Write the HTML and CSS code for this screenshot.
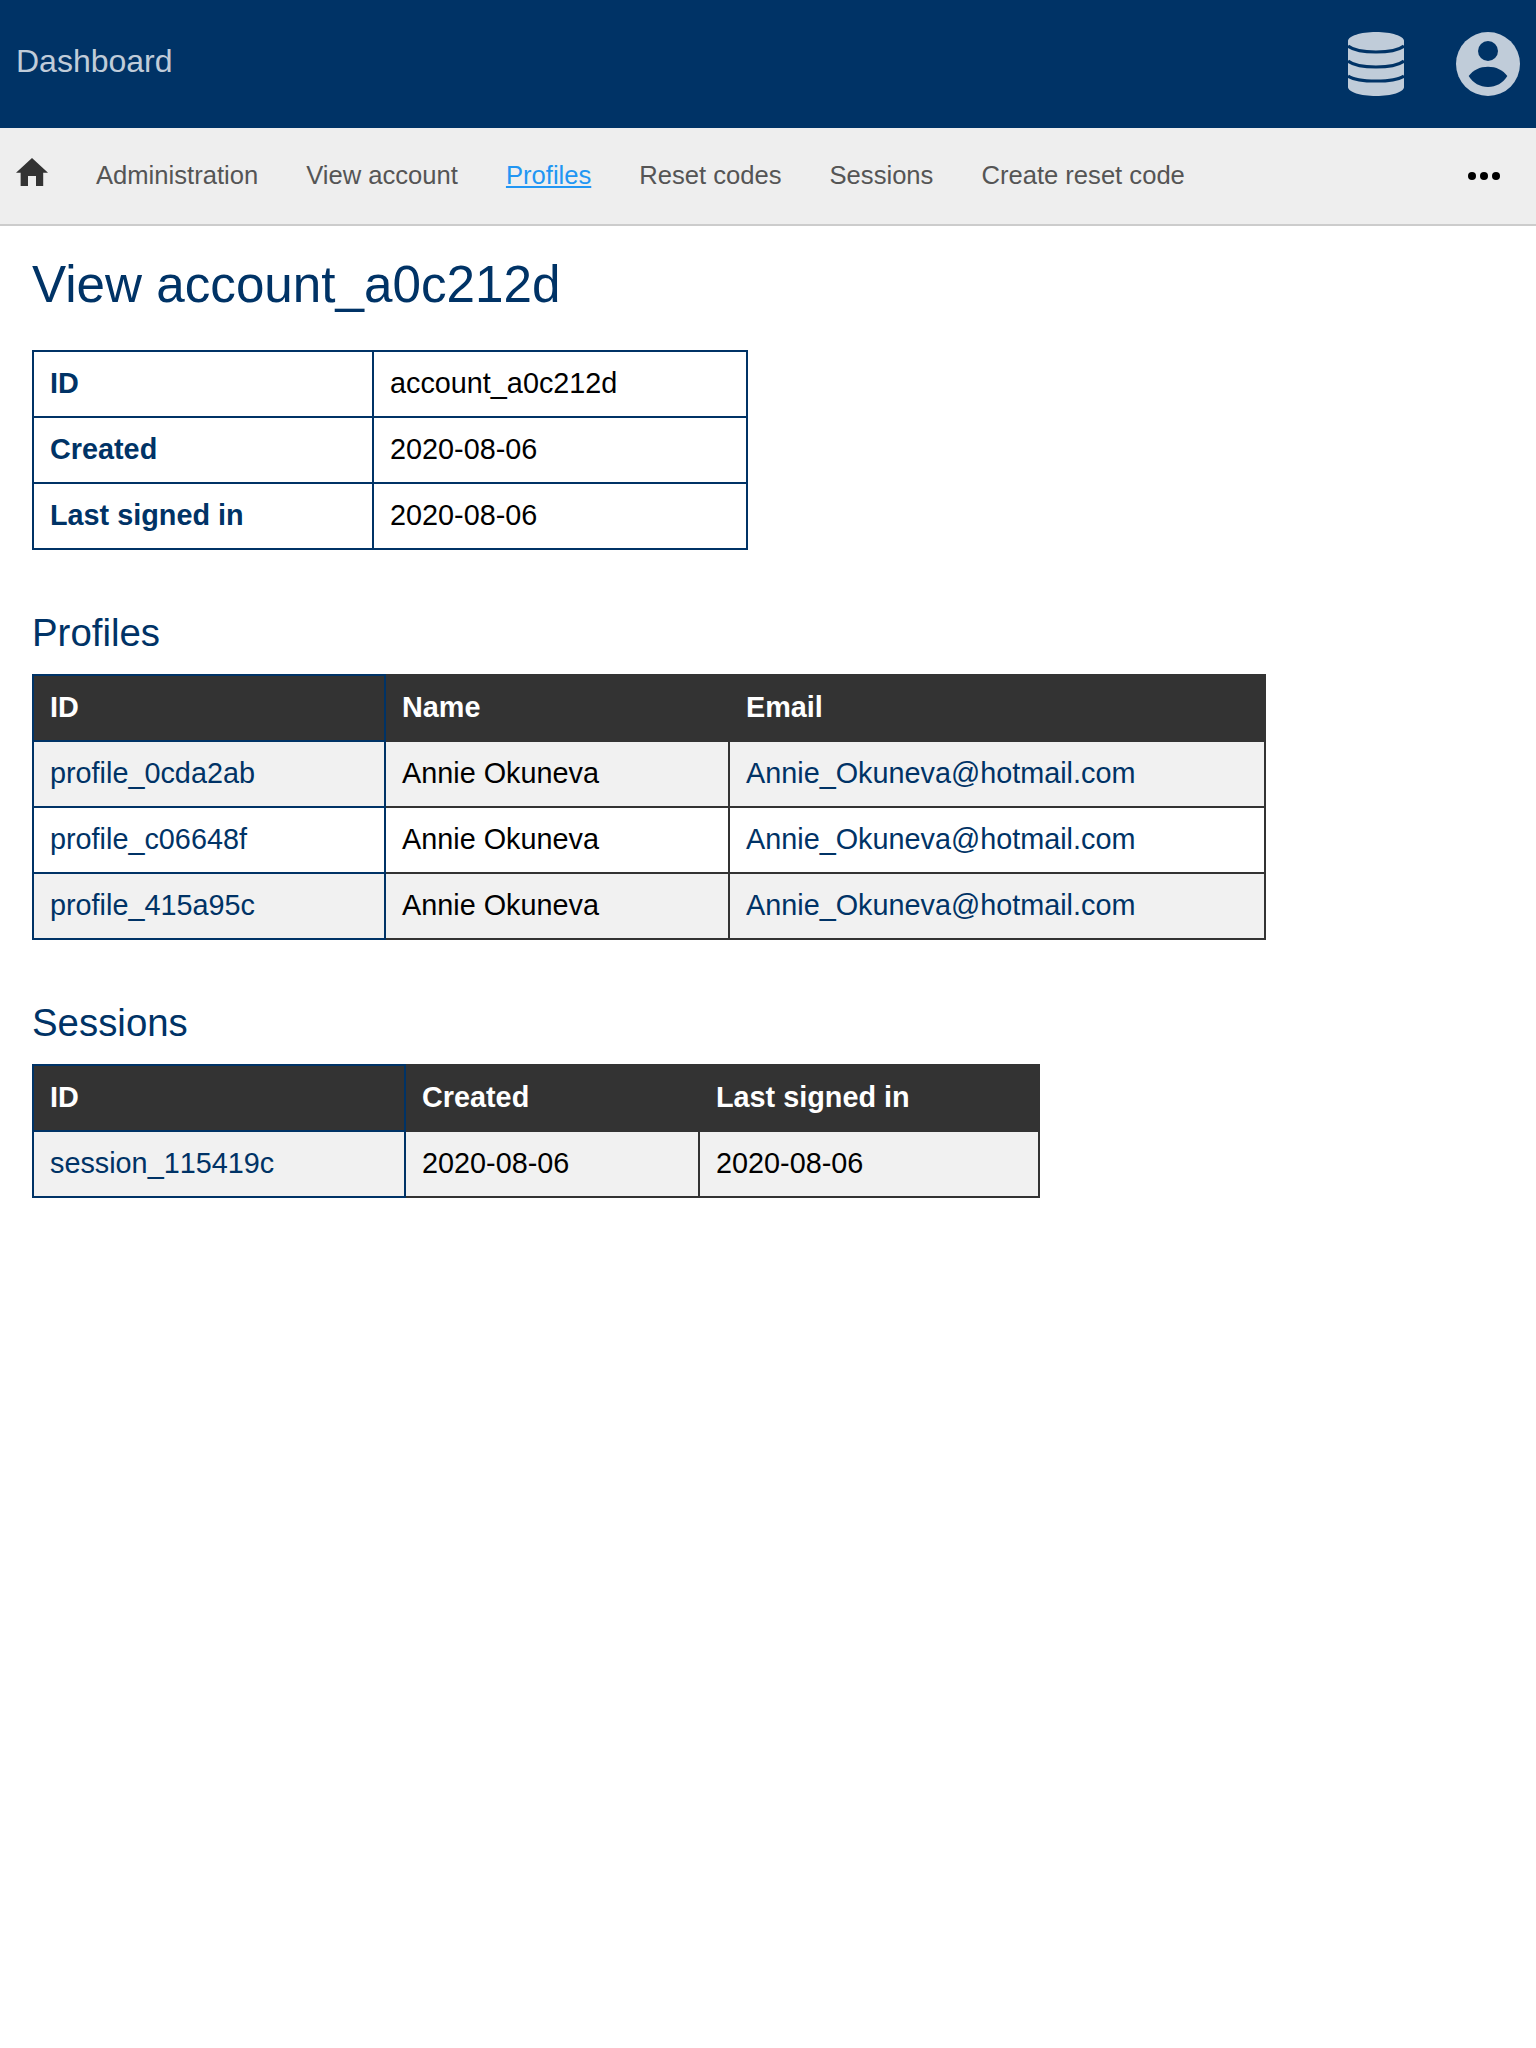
FILE: index.html
```html
<!DOCTYPE html>
<html lang="en">
<head>
<meta charset="utf-8">
<title>View account_a0c212d</title>
<link rel="stylesheet" href="styles.css">
</head>
<body>
<header class="topbar">
  <a class="brand" href="#">Dashboard</a>
  <div class="top-icons">
    <svg class="db-icon" viewBox="0 0 56 64" aria-hidden="true">
      <path class="icon-fill" d="M0 9C0 4 12.5 0 28 0S56 4 56 9V55C56 60 43.5 64 28 64S0 60 0 55Z"/>
      <path class="icon-cut" d="M0 14C5 18 16 20 28 20S51 18 56 14"/>
      <path class="icon-cut" d="M0 29C5 33 16 35 28 35S51 33 56 29"/>
      <path class="icon-cut" d="M0 44C5 47.500 16 49 28 49S51 47.500 56 44"/>
    </svg>
    <svg class="user-icon" viewBox="0 0 64 64" aria-hidden="true">
      <circle class="icon-fill" cx="32" cy="32" r="32"/>
      <circle class="icon-hole" cx="32" cy="19" r="10"/>
      <path class="icon-hole" d="M12.700 44C17 38 24 34.700 32 34.700S47 38 51.300 44C47 51 40 55 32 55S17 51 12.700 44Z"/>
    </svg>
  </div>
</header>
<nav class="navbar">
  <a class="home" href="#" aria-label="Home">
    <svg viewBox="2 3 20 17" preserveAspectRatio="none" aria-hidden="true"><path d="M9.500 20v-6h5v6h4.500v-8h3L12 3 2 12h2.900v8z"/></svg>
  </a>
  <a class="nav-link" href="#">Administration</a>
  <a class="nav-link" href="#">View account</a>
  <a class="nav-link active" href="#">Profiles</a>
  <a class="nav-link" href="#">Reset codes</a>
  <a class="nav-link" href="#">Sessions</a>
  <a class="nav-link" href="#">Create reset code</a>
  <svg class="more" viewBox="0 0 32 8" aria-hidden="true"><circle cx="4" cy="4" r="4"/><circle cx="16" cy="4" r="4"/><circle cx="28" cy="4" r="4"/></svg>
</nav>
<main class="content">
  <h1>View account_a0c212d</h1>
  <table class="info">
    <colgroup><col class="info-a"><col class="info-b"></colgroup>
    <tbody>
      <tr><th>ID</th><td>account_a0c212d</td></tr>
      <tr><th>Created</th><td>2020-08-06</td></tr>
      <tr><th>Last signed in</th><td>2020-08-06</td></tr>
    </tbody>
  </table>
  <h2>Profiles</h2>
  <table class="data">
    <colgroup><col class="prof-a"><col class="prof-b"><col class="prof-c"></colgroup>
    <thead><tr><th>ID</th><th>Name</th><th>Email</th></tr></thead>
    <tbody>
      <tr><td><a href="#">profile_0cda2ab</a></td><td>Annie Okuneva</td><td><a href="#">Annie_Okuneva@hotmail.com</a></td></tr>
      <tr><td><a href="#">profile_c06648f</a></td><td>Annie Okuneva</td><td><a href="#">Annie_Okuneva@hotmail.com</a></td></tr>
      <tr><td><a href="#">profile_415a95c</a></td><td>Annie Okuneva</td><td><a href="#">Annie_Okuneva@hotmail.com</a></td></tr>
    </tbody>
  </table>
  <h2>Sessions</h2>
  <table class="data">
    <colgroup><col class="sess-a"><col class="sess-b"><col class="sess-c"></colgroup>
    <thead><tr><th>ID</th><th>Created</th><th>Last signed in</th></tr></thead>
    <tbody>
      <tr><td><a href="#">session_115419c</a></td><td>2020-08-06</td><td>2020-08-06</td></tr>
    </tbody>
  </table>
</main>
</body>
</html>
```
FILE: styles.css
```css
* { box-sizing: border-box; }
html, body { margin: 0; padding: 0; }
body {
  background: #fff;
  color: #000;
  font-family: "Liberation Sans", Arial, sans-serif;
  font-size: 28.8px;
}
.topbar {
  height: 128px;
  background: #003366;
  display: flex;
  align-items: center;
  justify-content: space-between;
  padding: 0 16px;
}
.brand {
  color: #c0ccd9;
  font-size: 32px;
  text-decoration: none;
  position: relative;
  top: -3px;
}
.top-icons { display: flex; align-items: center; gap: 52px; }
.db-icon { width: 56px; height: 64px; display: block; }
.user-icon { width: 64px; height: 64px; display: block; }
.icon-fill { fill: #c0ccd9; }
.icon-hole { fill: #003366; }
.icon-cut { fill: none; stroke: #003366; stroke-width: 3.2; }
.navbar {
  height: 98px;
  background: #eeeeee;
  border-bottom: 2px solid #cccccc;
  display: flex;
  align-items: center;
  gap: 48px;
  padding: 0 36px 2px 16px;
}
.home { display: block; width: 32px; height: 28px; margin-top: -6px; }
.home svg { display: block; width: 32px; height: 28px; fill: #333333; }
.nav-link { color: #555555; font-size: 25.6px; text-decoration: none; }
.nav-link.active { color: #2196f3; text-decoration: underline; }
.more { width: 32px; height: 8px; margin-left: auto; margin-top: 2px; fill: #000; }
.content { padding: 29px 32px; }
h1 {
  margin: 0 0 36px;
  color: #003366;
  font-size: 51.2px;
  font-weight: 400;
}
h2 {
  margin: 61px 0 19px;
  color: #003366;
  font-size: 38.4px;
  font-weight: 400;
}
table {
  border-collapse: collapse;
  table-layout: fixed;
}
th, td {
  padding: 15px 16px 17px;
  line-height: 32px;
  font-size: 28.8px;
  font-kerning: none;
  text-align: left;
  vertical-align: middle;
}
a { color: #003366; text-decoration: none; }
.info { width: 714px; border: 2px solid #003366; }
.info th, .info td { border: 2px solid #003366; }
.info th { color: #003366; font-weight: 700; }
.info-a { width: 340px; }
.info-b { width: 374px; }
.data th { background: #333333; color: #fff; font-weight: 700; border: 2px solid #333333; }
.data td { border: 2px solid #333333; }
.data tbody tr:nth-child(odd) td { background: #f1f1f1; }
.data th:first-child, .data td:first-child { border: 2px solid #003366; }
.data:nth-of-type(2) { width: 1232px; }
.data:nth-of-type(3) { width: 1006px; }
.prof-a { width: 352px; }
.prof-b { width: 344px; }
.prof-c { width: 536px; }
.sess-a { width: 372px; }
.sess-b { width: 294px; }
.sess-c { width: 340px; }
```
